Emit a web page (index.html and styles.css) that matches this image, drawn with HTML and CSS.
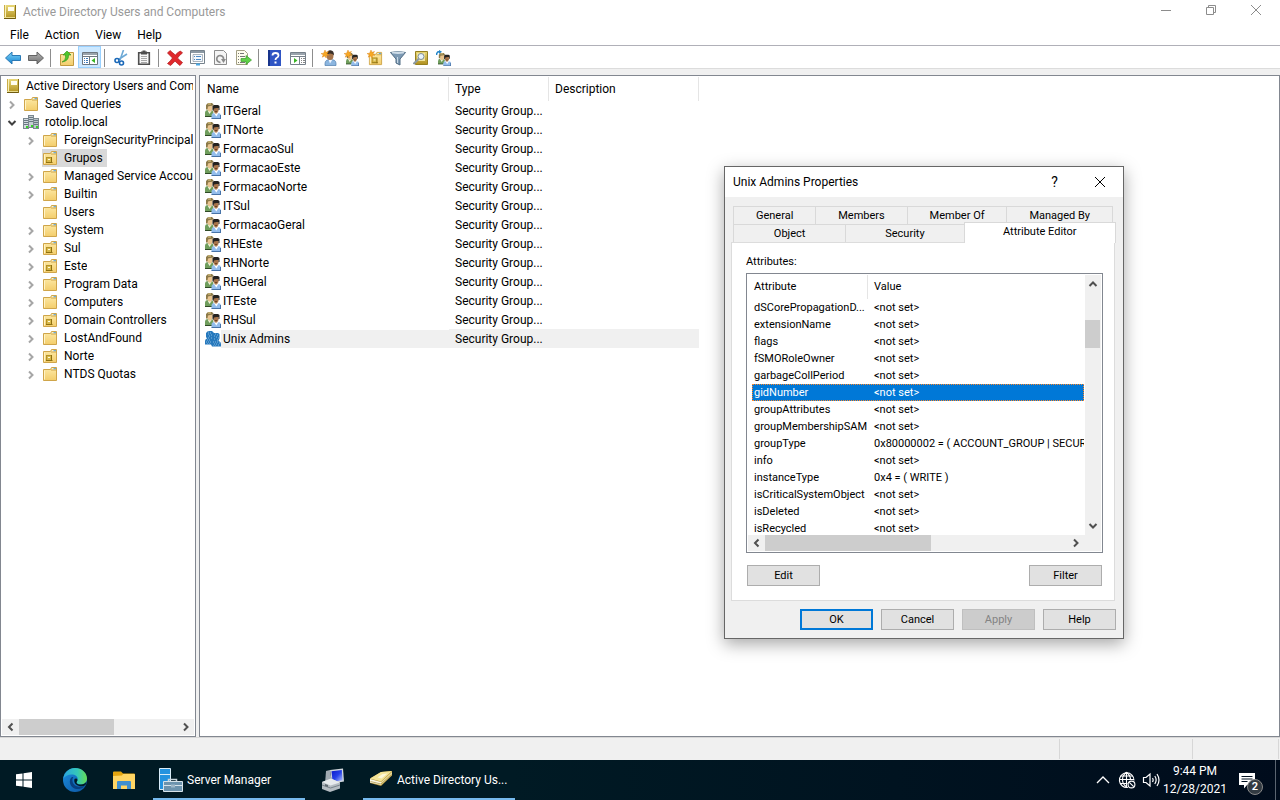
FILE: index.html
```html
<!DOCTYPE html>
<html lang="en">
<head>
    <meta charset="UTF-8">
    <meta name="viewport" content="width=device-width, initial-scale=1.0">
    <title>Active Directory Users and Computers</title>
    <link rel="stylesheet" href="styles.css">
</head>
<body>
    <!-- Shared icons -->
    <svg class="defs" aria-hidden="true">
        <defs>
            <linearGradient id="g-folder" x1="0" y1="0" x2="0" y2="1"><stop offset="0" stop-color="#fdeaa8"/><stop offset="1" stop-color="#f3cd6b"/></linearGradient>
            <linearGradient id="g-book" x1="0" y1="0" x2="0" y2="1"><stop offset="0" stop-color="#e9d878"/><stop offset="1" stop-color="#b08f1c"/></linearGradient>
            <linearGradient id="g-blue" x1="0" y1="0" x2="0" y2="1"><stop offset="0" stop-color="#7fd4f8"/><stop offset="1" stop-color="#1583d0"/></linearGradient>
            <linearGradient id="g-gray" x1="0" y1="0" x2="0" y2="1"><stop offset="0" stop-color="#b5b5b5"/><stop offset="1" stop-color="#6f6f6f"/></linearGradient>
            <linearGradient id="g-edge" x1="0" y1="0" x2="1" y2="0"><stop offset="0" stop-color="#2aa5e0"/><stop offset="0.6" stop-color="#35c8b8"/><stop offset="1" stop-color="#66dc52"/></linearGradient>
            <linearGradient id="g-edge-dark" x1="0" y1="0" x2="1" y2="1"><stop offset="0" stop-color="#1b8ee0"/><stop offset="1" stop-color="#0c54a0"/></linearGradient>
            <linearGradient id="g-screen" x1="0" y1="0" x2="1" y2="1"><stop offset="0" stop-color="#0a18c8"/><stop offset="0.5" stop-color="#2540e8"/><stop offset="1" stop-color="#b8c8ff"/></linearGradient>
        </defs>
        <symbol id="i-book" viewBox="0 0 16 16">
            <path d="M2 1h12v14H2z" fill="url(#g-book)"/>
            <path d="M2 1h2v12H2z" fill="#f8f0b8"/>
            <path d="M2.500 1v14" stroke="#c9ad48"/>
            <rect x="6" y="3" width="6" height="4" fill="#fffdf0"/>
            <path d="M2 13.500h12" stroke="#e9dc8c"/>
            <path d="M2 14.500h12" stroke="#6e5a10"/>
            <path d="M13.500 1v14" stroke="#8d7318"/>
        </symbol>
        <symbol id="i-folder" viewBox="0 0 16 16">
            <path d="M1.500 14.500v-11h7l1-2h5v13z" fill="url(#g-folder)" stroke="#cfa54a"/>
            <path d="M9 4h5.500" stroke="#cfa54a"/>
            <path d="M10.500 2.700h1" stroke="#fff"/><path d="M11.500 2.700h2.500" stroke="#4f9fe0"/>
            <path d="M2.500 13.500v-9" stroke="#fff4c8"/>
        </symbol>
        <symbol id="i-ou" viewBox="0 0 16 16">
            <use href="#i-folder"/>
            <path d="M4 7h6v6H4z" fill="#d8b94a"/>
            <path d="M4 12.500h6.500M9.500 7v6" stroke="#8f7112"/>
            <path d="M4 7.500h5M4.500 7v5" stroke="#b4932a"/>
            <path d="M6 9.500h2" stroke="#fffbe0"/>
        </symbol>
        <symbol id="i-domain" viewBox="0 0 16 16">
            <rect x="5.500" y="1.500" width="5" height="12" fill="#c5ced4" stroke="#7b8890"/>
            <rect x="0.500" y="4.500" width="5" height="10" fill="#d3dbe0" stroke="#7b8890"/>
            <rect x="10.500" y="4.500" width="5" height="10" fill="#b8c3ca" stroke="#7b8890"/>
            <path d="M6 3.500h4M6 5.500h4M6 7.500h4M1 6.500h4M1 8.500h4M1 10.500h4M11 6.500h4M11 8.500h4M11 10.500h4" stroke="#697882"/>
            <path d="M3 13h2M8 12h2M13 13h2" stroke="#35d228" stroke-width="2"/>
        </symbol>
        <symbol id="i-group" viewBox="0 0 16 16">
            <path d="M0 13.500V10q0-3 3-3h4l1.500 2-1.500 4.500z" fill="#6f9d5c"/>
            <path d="M0 13.500h7" stroke="#2f4a26"/>
            <path d="M2.500 7.500L4.500 11 7 7.500z" fill="#eef3dc"/>
            <path d="M2 1.500h5.500V6L6 8.500H4L2 6z" fill="#e9c48f"/>
            <path d="M1 6.500V2L3 0h4l1.500 1.500v1L5 3 3 3.500 2.500 6.500z" fill="#8d7a48"/>
            <path d="M3 1h3" stroke="#e6d08c"/>
            <path d="M6.500 15.500V13q0-3 3-3H13q3 0 3 3v2.500z" fill="#93bdec"/>
            <path d="M6.500 15.500H16M15.500 12v4" stroke="#4773a8"/>
            <path d="M9 10l2.300 3.500L13.500 10z" fill="#fff"/>
            <path d="M8.500 4h5v4L12 10.500h-2L8.500 8z" fill="#a8744a"/>
            <path d="M7.500 7V3L9 2h4l1.500 1v4h-1V5h-2L9 5.500 8.500 8z" fill="#252220"/>
            <path d="M10 8.500h2" stroke="#6d4426"/>
        </symbol>
        <symbol id="i-group-sel" viewBox="0 0 16 16">
            <path d="M0 13.500V10q0-2 2-2.500L1 6V2l2-2h4l2 2h4l1.500 1v4.500L13.500 10q2.500.5 2.500 3v2.500H7l-1-2z" fill="#2779bd"/>
            <path d="M3 1h1M5 2h1M3 3h1M6 4h1M4 5h1M3 7h1M6 7h1M2 9h1M4 9h1M1 11h1M3 11h1M5 11h1M2 13h1M4 13h1M10 3h1M12 4h1M9 5h1M11 6h1M13 7h1M9 8h1M12 9h1M8 11h1M10 11h1M12 11h1M14 12h1M9 13h1M11 13h1M13 14h1M8 15h1M10 15h1" stroke="#86b9df"/>
        </symbol>
        <symbol id="i-star" viewBox="0 0 16 16">
            <path d="M4 0l.9 2.300L7.500 1.500 6 3.700 8 5.200 5.500 5.300 5.200 8 3.700 6 1.200 7.200 2.200 4.800 0 3.600l2.600-.4z" fill="#f7a823" stroke="#d97c10" stroke-width="0.400"/>
        </symbol>
        <symbol id="i-right" viewBox="0 0 10 10"><path d="M3 1.500L6.500 5 3 8.500" fill="none" stroke="currentColor" stroke-width="2"/></symbol>
        <symbol id="i-left" viewBox="0 0 10 10"><path d="M6.500 1.500L3 5l3.500 3.500" fill="none" stroke="currentColor" stroke-width="2"/></symbol>
        <symbol id="i-down" viewBox="0 0 10 10"><path d="M1.500 3L5 6.500 8.500 3" fill="none" stroke="currentColor" stroke-width="2"/></symbol>
        <symbol id="i-up" viewBox="0 0 10 10"><path d="M1.500 7L5 3.500 8.500 7" fill="none" stroke="currentColor" stroke-width="2"/></symbol>
        <symbol id="i-close" viewBox="0 0 12 12"><path d="M1 1l10 10M11 1L1 11" fill="none" stroke="currentColor"/></symbol>
    </svg>

    <header class="titlebar">
        <svg class="icon"><use href="#i-book"/></svg>
        <h1 class="window-title">Active Directory Users and Computers</h1>
        <div class="window-buttons">
            <button aria-label="Minimize"><svg width="12" height="12"><path d="M1 6.500h10" stroke="currentColor"/></svg></button>
            <button aria-label="Restore"><svg width="12" height="12"><path d="M1.500 3.500h7v7h-7zM3.500 3V1.500h7v7H9" fill="none" stroke="currentColor"/></svg></button>
            <button aria-label="Close"><svg width="12" height="12"><use href="#i-close"/></svg></button>
        </div>
    </header>

    <nav class="menubar">
        <button>File</button>
        <button>Action</button>
        <button>View</button>
        <button>Help</button>
    </nav>

    <div class="toolbar">
        <button aria-label="Back"><svg class="icon" viewBox="0 0 16 16"><path d="M0.500 8L7 2v3.500h8.500v5H7V14z" fill="url(#g-blue)" stroke="#2a79b5"/></svg></button>
        <button aria-label="Forward"><svg class="icon" viewBox="0 0 16 16"><path d="M15.500 8L9 2v3.500H.5v5H9V14z" fill="url(#g-gray)" stroke="#636363"/></svg></button>
        <span class="sep"></span>
        <button aria-label="Up one level"><svg class="icon" viewBox="0 0 16 16"><path d="M1.500 15.500v-11h6l1-2h6v13z" fill="url(#g-folder)" stroke="#c29a3f"/><path d="M3 12Q7 10.500 6.500 5H4l4-4 4 4H9.500Q10 11 3 12z" fill="#4fc62c" stroke="#2e8f18" stroke-width="0.600"/></svg></button>
        <button class="pressed" aria-label="Show console tree"><svg class="icon" viewBox="0 0 16 16"><path d="M.5 2.500h15v12H.5z" fill="#fff" stroke="#6e7780"/><path d="M1 4h14" stroke="#9aa4ad" stroke-width="2"/><path d="M1 6.500h14M7.500 7v7" stroke="#6e7780"/><path d="M2 8.500h1M4 8.500h2M2 10.500h1M4 10.500h2M2 12.500h1M4 12.500h2" stroke="#3d78b8"/><path d="M13 8v5l-3.500-2.500z" fill="#37b522"/></svg></button>
        <span class="sep"></span>
        <button aria-label="Cut"><svg class="icon" viewBox="0 0 16 16"><path d="M10.500 0L7 10M14 4L5.500 9.500" stroke="#6da9d6" stroke-width="1.600"/><circle cx="4" cy="10.500" r="2" fill="none" stroke="#1a68b8" stroke-width="1.600"/><circle cx="8.500" cy="13" r="2" fill="none" stroke="#1a68b8" stroke-width="1.600"/></svg></button>
        <button aria-label="Paste"><svg class="icon" viewBox="0 0 16 16"><path d="M2.700 2.700h10.600v11.600H2.700z" fill="#f7f7f7" stroke="#4e4e4e" stroke-width="1.600"/><path d="M5 1.500h1.500V.5h3v1H11v3H5z" fill="#4e4e4e"/><path d="M5 6.500h6M5 8.500h6M5 10.500h6M5 12.500h6" stroke="#a8a8a8"/></svg></button>
        <span class="sep"></span>
        <button aria-label="Delete"><svg class="icon" viewBox="0 0 16 16"><path d="M0.500 3l2.500-2.500Q6 3 8.300 5 11 2 13.500 1L15.500 3Q12.500 5 10.500 8q2 2.200 5 4.500L13 15.500Q10 13.500 8 11 6 13.500 3.500 15.500L.5 13.500Q3.500 11 5.500 8 3 5.500.5 3z" fill="#e0282c" stroke="#b01518" stroke-width="0.700"/></svg></button>
        <button aria-label="Properties"><svg class="icon" viewBox="0 0 16 16"><path d="M.5.500h14v13H.5z" fill="#fff" stroke="#76828c"/><path d="M1 2h13" stroke="#8b98a3" stroke-width="2"/><path d="M3 4.500h9.500v7H3z" fill="#f3f8fd" stroke="#8a97a2" stroke-width="0.700"/><path d="M4 6.500h1M6 6.500h5M4 9.500h1M6 9.500h5" stroke="#4d8ac5"/><path d="M6 14.500h4" stroke="#4aa8e5" stroke-width="2"/></svg></button>
        <button aria-label="Refresh"><svg class="icon" viewBox="0 0 16 16"><path d="M1.500.500h9l3 3v11h-12z" fill="#f4f4f4" stroke="#8c8c8c"/><path d="M10.500 9.500a3.400 3.400 0 1 0-3 2.800" fill="none" stroke="#8a8a8a" stroke-width="1.700"/><path d="M8 9h5l-2.500 4z" fill="#8a8a8a"/></svg></button>
        <button aria-label="Export list"><svg class="icon" viewBox="0 0 16 16"><path d="M.5.500h8l3 3v11H.5z" fill="#fffdee" stroke="#a39f84"/><path d="M2 3.500h1M4 3.500h4M2 6.500h1M4 6.500h5M2 9.500h1M2 12.500h1M4 12.500h5" stroke="#777"/><path d="M5 8.500h5V5.500l5.500 4.500L10 14.500v-3H5z" fill="#5fd048" stroke="#3a9c28" stroke-width="0.700"/></svg></button>
        <span class="sep"></span>
        <button aria-label="Help"><svg class="icon help-icon" viewBox="0 0 16 16"><path d="M1 0h13v16H1z" fill="#2f55c4"/><path d="M1 0h2v16H1z" fill="#18348c"/><path d="M5.500 5.500Q5.500 3 8.500 3t3 2.500Q11.500 7 9.500 8 8.500 8.500 8.500 10" fill="none" stroke="#fff" stroke-width="1.800"/><path d="M7.500 11.500h2v2h-2z" fill="#fff"/></svg></button>
        <button aria-label="Show action pane"><svg class="icon" viewBox="0 0 16 16"><path d="M.5 2.500h15v12H.5z" fill="#fff" stroke="#76808a"/><path d="M1 4h14" stroke="#9aa4ad" stroke-width="2"/><path d="M1 6.500h14M9.500 7v7" stroke="#76808a"/><path d="M11 8.500h1M13 8.500h2M11 10.500h1M13 10.500h2M11 12.500h1M13 12.500h2" stroke="#888"/><path d="M4 8v5l3.500-2.500z" fill="#37b522"/></svg></button>
        <span class="sep"></span>
        <button aria-label="New user"><svg class="icon" viewBox="0 0 16 16"><path d="M4 15.500v-2Q4 9.500 9.500 9.500t5.500 4v2z" fill="#8bb5df" stroke="#4d7cad" stroke-width="0.700"/><path d="M7.500 9.500l1.500 4 2.500-4z" fill="#f0f6ff"/><ellipse cx="9" cy="5.500" rx="3.500" ry="4.500" fill="#a5744b"/><path d="M5.500 5Q6 0 9.500.2t3.500 5Q11.500 3.500 9 3.500 7 3.500 5.500 5z" fill="#3b3029"/><use href="#i-star"/></svg></button>
        <button aria-label="New group"><svg class="icon" viewBox="0 0 16 16"><use href="#i-group" x="2" y="3" width="13" height="13"/><use href="#i-star"/></svg></button>
        <button aria-label="New organizational unit"><svg class="icon" viewBox="0 0 16 16"><use href="#i-ou" x="1" y="1" width="15" height="15"/><use href="#i-star"/></svg></button>
        <button aria-label="Filter"><svg class="icon" viewBox="0 0 16 16"><path d="M.5 2.500Q8 .5 15.500 2.500L10 9v6l-4-2V9z" fill="#7d9ab4" stroke="#4e6a82"/><ellipse cx="8" cy="2.700" rx="6.500" ry="1.200" fill="#cfdde8"/><path d="M7.500 7v6" stroke="#c8d8e5"/></svg></button>
        <button aria-label="Find"><svg class="icon" viewBox="0 0 16 16"><path d="M2.500 1.500h12v13h-12z" fill="url(#g-book)" stroke="#96801f"/><path d="M4 3h8v8H4z" fill="#efe29a"/><circle cx="8" cy="6.500" r="3" fill="#e8f4fc" stroke="#7e8c94"/><path d="M5.800 8.800L.5 14" stroke="#8c9aa3" stroke-width="2"/></svg></button>
        <button aria-label="Add to group"><svg class="icon" viewBox="0 0 16 16"><use href="#i-group" x="2" y="3" width="13" height="13"/><path d="M.5 5Q.5 1.500 4 1.500" fill="none" stroke="#2385c8" stroke-width="1.500"/><path d="M3 0l3 1.800L3 4z" fill="#2385c8"/></svg></button>
    </div>

    <main class="workspace">
        <aside class="tree-pane">
            <ul class="tree">
                <li><div class="node root"><svg class="icon"><use href="#i-book"/></svg><span>Active Directory Users and Computers</span></div>
                    <ul>
                        <li><div class="node"><button class="twist" aria-label="Expand"><svg><use href="#i-right"/></svg></button><svg class="icon"><use href="#i-folder"/></svg><span>Saved Queries</span></div></li>
                        <li><div class="node"><button class="twist open" aria-label="Collapse"><svg><use href="#i-down"/></svg></button><svg class="icon"><use href="#i-domain"/></svg><span>rotolip.local</span></div>
                            <ul class="level">
                                <li><div class="node"><button class="twist" aria-label="Expand"><svg><use href="#i-right"/></svg></button><svg class="icon"><use href="#i-folder"/></svg><span>ForeignSecurityPrincipals</span></div></li>
                                <li><div class="node"><i class="twist"></i><span class="picked"><svg class="icon"><use href="#i-ou"/></svg><span>Grupos</span></span></div></li>
                                <li><div class="node"><button class="twist" aria-label="Expand"><svg><use href="#i-right"/></svg></button><svg class="icon"><use href="#i-folder"/></svg><span>Managed Service Accounts</span></div></li>
                                <li><div class="node"><button class="twist" aria-label="Expand"><svg><use href="#i-right"/></svg></button><svg class="icon"><use href="#i-folder"/></svg><span>Builtin</span></div></li>
                                <li><div class="node"><i class="twist"></i><svg class="icon"><use href="#i-folder"/></svg><span>Users</span></div></li>
                                <li><div class="node"><button class="twist" aria-label="Expand"><svg><use href="#i-right"/></svg></button><svg class="icon"><use href="#i-folder"/></svg><span>System</span></div></li>
                                <li><div class="node"><button class="twist" aria-label="Expand"><svg><use href="#i-right"/></svg></button><svg class="icon"><use href="#i-ou"/></svg><span>Sul</span></div></li>
                                <li><div class="node"><button class="twist" aria-label="Expand"><svg><use href="#i-right"/></svg></button><svg class="icon"><use href="#i-ou"/></svg><span>Este</span></div></li>
                                <li><div class="node"><button class="twist" aria-label="Expand"><svg><use href="#i-right"/></svg></button><svg class="icon"><use href="#i-folder"/></svg><span>Program Data</span></div></li>
                                <li><div class="node"><button class="twist" aria-label="Expand"><svg><use href="#i-right"/></svg></button><svg class="icon"><use href="#i-folder"/></svg><span>Computers</span></div></li>
                                <li><div class="node"><button class="twist" aria-label="Expand"><svg><use href="#i-right"/></svg></button><svg class="icon"><use href="#i-ou"/></svg><span>Domain Controllers</span></div></li>
                                <li><div class="node"><button class="twist" aria-label="Expand"><svg><use href="#i-right"/></svg></button><svg class="icon"><use href="#i-folder"/></svg><span>LostAndFound</span></div></li>
                                <li><div class="node"><button class="twist" aria-label="Expand"><svg><use href="#i-right"/></svg></button><svg class="icon"><use href="#i-ou"/></svg><span>Norte</span></div></li>
                                <li><div class="node"><button class="twist" aria-label="Expand"><svg><use href="#i-right"/></svg></button><svg class="icon"><use href="#i-folder"/></svg><span>NTDS Quotas</span></div></li>
                            </ul>
                        </li>
                    </ul>
                </li>
            </ul>
            <div class="scroll-x">
                <button aria-label="Scroll left"><svg><use href="#i-left"/></svg></button>
                <div class="track"><div class="thumb tree-thumb"></div></div>
                <button aria-label="Scroll right"><svg><use href="#i-right"/></svg></button>
            </div>
        </aside>

        <section class="list-pane">
            <table class="objects">
                <colgroup><col class="col-name"><col class="col-type"><col class="col-desc"></colgroup>
                <thead>
                    <tr><th>Name</th><th>Type</th><th>Description</th></tr>
                </thead>
                <tbody>
                    <tr><td><svg class="icon"><use href="#i-group"/></svg><span>ITGeral</span></td><td>Security Group...</td><td></td></tr>
                    <tr><td><svg class="icon"><use href="#i-group"/></svg><span>ITNorte</span></td><td>Security Group...</td><td></td></tr>
                    <tr><td><svg class="icon"><use href="#i-group"/></svg><span>FormacaoSul</span></td><td>Security Group...</td><td></td></tr>
                    <tr><td><svg class="icon"><use href="#i-group"/></svg><span>FormacaoEste</span></td><td>Security Group...</td><td></td></tr>
                    <tr><td><svg class="icon"><use href="#i-group"/></svg><span>FormacaoNorte</span></td><td>Security Group...</td><td></td></tr>
                    <tr><td><svg class="icon"><use href="#i-group"/></svg><span>ITSul</span></td><td>Security Group...</td><td></td></tr>
                    <tr><td><svg class="icon"><use href="#i-group"/></svg><span>FormacaoGeral</span></td><td>Security Group...</td><td></td></tr>
                    <tr><td><svg class="icon"><use href="#i-group"/></svg><span>RHEste</span></td><td>Security Group...</td><td></td></tr>
                    <tr><td><svg class="icon"><use href="#i-group"/></svg><span>RHNorte</span></td><td>Security Group...</td><td></td></tr>
                    <tr><td><svg class="icon"><use href="#i-group"/></svg><span>RHGeral</span></td><td>Security Group...</td><td></td></tr>
                    <tr><td><svg class="icon"><use href="#i-group"/></svg><span>ITEste</span></td><td>Security Group...</td><td></td></tr>
                    <tr><td><svg class="icon"><use href="#i-group"/></svg><span>RHSul</span></td><td>Security Group...</td><td></td></tr>
                    <tr class="current"><td><svg class="icon"><use href="#i-group-sel"/></svg><span>Unix Admins</span></td><td>Security Group...</td><td></td></tr>
                </tbody>
            </table>
        </section>
    </main>

    <div class="statusbar">
        <span class="status-main"></span>
        <span class="status-cell"></span>
        <span class="status-cell last"></span>
    </div>

    <!-- Properties window -->
    <section class="dialog" role="dialog" aria-labelledby="dialog-title">
        <header class="dialog-head">
            <h2 id="dialog-title">Unix Admins Properties</h2>
            <button class="ask" aria-label="What's this">?</button>
            <button aria-label="Close"><svg width="12" height="12"><use href="#i-close"/></svg></button>
        </header>
        <div class="tabs" role="tablist">
            <div class="tab-row back">
                <button role="tab">General</button>
                <button role="tab">Members</button>
                <button role="tab">Member Of</button>
                <button role="tab">Managed By</button>
            </div>
            <div class="tab-row front">
                <button role="tab">Object</button>
                <button role="tab">Security</button>
                <button role="tab" class="active" aria-selected="true">Attribute Editor</button>
            </div>
        </div>
        <div class="sheet" role="tabpanel">
            <h3 class="caption">Attributes:</h3>
            <div class="attr-box">
                <div class="attr-view">
                    <div class="attr-clip">
                        <table class="attrs">
                            <colgroup><col class="col-attr"><col></colgroup>
                            <thead>
                                <tr><th>Attribute</th><th>Value</th></tr>
                            </thead>
                            <tbody>
                                <tr><td>dSCorePropagationD...</td><td>&lt;not set&gt;</td></tr>
                                <tr><td>extensionName</td><td>&lt;not set&gt;</td></tr>
                                <tr><td>flags</td><td>&lt;not set&gt;</td></tr>
                                <tr><td>fSMORoleOwner</td><td>&lt;not set&gt;</td></tr>
                                <tr><td>garbageCollPeriod</td><td>&lt;not set&gt;</td></tr>
                                <tr class="selected"><td>gidNumber</td><td>&lt;not set&gt;</td></tr>
                                <tr><td>groupAttributes</td><td>&lt;not set&gt;</td></tr>
                                <tr><td>groupMembershipSAM</td><td>&lt;not set&gt;</td></tr>
                                <tr><td>groupType</td><td>0x80000002 = ( ACCOUNT_GROUP | SECURITY_ENABLED )</td></tr>
                                <tr><td>info</td><td>&lt;not set&gt;</td></tr>
                                <tr><td>instanceType</td><td>0x4 = ( WRITE )</td></tr>
                                <tr><td>isCriticalSystemObject</td><td>&lt;not set&gt;</td></tr>
                                <tr><td>isDeleted</td><td>&lt;not set&gt;</td></tr>
                                <tr><td>isRecycled</td><td>&lt;not set&gt;</td></tr>
                            </tbody>
                        </table>
                    </div>
                    <div class="scroll-y">
                        <button aria-label="Scroll up"><svg><use href="#i-up"/></svg></button>
                        <div class="track"><div class="thumb attr-thumb-y"></div></div>
                        <button aria-label="Scroll down"><svg><use href="#i-down"/></svg></button>
                    </div>
                </div>
                <div class="scroll-x with-corner">
                    <button aria-label="Scroll left"><svg><use href="#i-left"/></svg></button>
                    <div class="track"><div class="thumb attr-thumb-x"></div></div>
                    <button aria-label="Scroll right"><svg><use href="#i-right"/></svg></button>
                </div>
            </div>
            <div class="sheet-actions">
                <button class="btn">Edit</button>
                <button class="btn">Filter</button>
            </div>
        </div>
        <footer class="dialog-actions">
            <button class="btn default">OK</button>
            <button class="btn">Cancel</button>
            <button class="btn" disabled>Apply</button>
            <button class="btn">Help</button>
        </footer>
    </section>

    <footer class="taskbar">
        <button class="task small start" aria-label="Start"><svg width="16" height="16"><path d="M0 2.300L6.500 1.400v6.100H0zM7.500 1.200L16 0v7.500H7.500zM0 8.500h6.500v6.100L0 13.700zM7.500 8.500H16V16l-8.500-1.200z" fill="#fff"/></svg></button>
        <button class="task small" aria-label="Microsoft Edge"><svg width="24" height="24"><circle cx="12" cy="12" r="12" fill="url(#g-edge-dark)"/><path d="M.3 10.500C1.300 4.500 6 0 12 0c7 0 12 5 12 10.500 0 3.500-2.500 6-6 6-3 0-4.500-1.200-4.500-2.200 0-.8 1.200-1.300 1.200-3.300 0-2.500-2.500-4.500-6-4.500C5 6.500 1.800 8.500.3 10.500z" fill="url(#g-edge)"/><path d="M9 9c-2 1.500-2.500 4-2 6 1 4.500 5 6.500 9 6 2.500-.3 4.500-1.500 5.500-3-5 2-11.500.5-12-5C9.400 11.500 9.500 10 10.500 9z" fill="#083f80"/><path d="M22.500 17c-1.500 1-3.500 1.500-5.500 1.200-4-.6-6.500-3.700-5.500-7.200 1-1 3-.5 3 1-.2 1.300-1 1.700-1 2.400 0 1 1.500 2.200 4.500 2.200 2 0 4.500-1 5.500-3z" fill="#001a24"/></svg></button>
        <button class="task small" aria-label="File Explorer"><svg width="24" height="24"><path d="M1 4.500q0-1 1-1h7l2 2h11q1 0 1 1v14H1z" fill="#e5a50e"/><path d="M1 8l9-.5 1-1.500h11q1 0 1 1v14H1z" fill="#ffd563"/><path d="M5 21v-7q0-1 1-1h12q1 0 1 1v7h-4v-3.500H9V21z" fill="#3f8fd0"/></svg></button>
        <button class="task wide running"><svg width="24" height="24"><path d="M.5.500h11v21H.5z" fill="#2493df" stroke="#d9ecf8"/><path d="M1 6.500h10" stroke="#d9ecf8" /><path d="M9.500 14v-2.500h8V14" fill="none" stroke="#c8d4dc" stroke-width="1.500"/><path d="M4.500 13.500h19v10h-19z" fill="#6c93ad" stroke="#d7e3ea"/><path d="M5 17.500h18" stroke="#d7e3ea"/><path d="M12 16.500h4v3h-4z" fill="#9fb9ca"/></svg><span>Server Manager</span></button>
        <button class="task computer" aria-label="Computer"><svg width="24" height="24"><path d="M9 2l13-1.500 1 13-12 2z" fill="#cfd6dc"/><path d="M10.500 3.200l10.300-1.200.8 10.200-10 1.600z" fill="url(#g-screen)"/><path d="M5 3l4-1 2 13-7 1z" fill="#9fa9b1"/><path d="M1 14l9-3.500 9 4v6l-10 3.500-8-3z" fill="#b4bcc2"/><path d="M1 14l9-3.500 9 4-9.500 3z" fill="#e6eaed"/><path d="M1 17l8.500 3 9.500-3" fill="none" stroke="#77828a"/><path d="M4 16l3 1v2l-3-1z" fill="#5d6870"/></svg></button>
        <button class="task wide running"><svg width="24" height="24"><path d="M1 10.500L12 4l11-1v4.500L12 18 1 15z" fill="#b8973a"/><path d="M1 10.500L12 4l11-1-11 10.500z" fill="#f3e497"/><path d="M1 11l11 3v3L1 14.500z" fill="#f9f6e4"/><path d="M12 14L23 4v2.800L12 17z" fill="#e8dca0"/><path d="M8.500 9.500l5-3.500 5-.5-6 5z" fill="#fdf8d8"/><path d="M1.500 13.500l10.500 2.500L22.500 6.500" fill="none" stroke="#a98c34" stroke-width="0.700"/></svg><span>Active Directory Us...</span></button>
        <div class="tray">
            <button aria-label="Show hidden icons"><svg width="16" height="16"><path d="M2 11l6-6 6 6" fill="none" stroke="#fff" stroke-width="1.300"/></svg></button>
            <button aria-label="Network"><svg width="18" height="18"><g fill="none" stroke="#fff" stroke-width="1.100"><path d="M10 16.300A7.300 7.300 0 1 1 16 9.500"/><path d="M8.500 1.200Q4.500 4 4.500 8.500t4 7.500M8.500 1.200Q12.500 4 12.500 9M8.500 1v15M1.500 8.500H16M2.500 5h12M2.500 12.500h7"/><circle cx="13.500" cy="13.500" r="3.400" fill="#001020"/><path d="M11.300 11.300l4.400 4.400"/></g></svg></button>
            <button aria-label="Volume"><svg width="18" height="18"><g fill="none" stroke="#fff" stroke-width="1.200"><path d="M1.500 6.500h2.500l4-3.500v12L4 11.500H1.500z"/><path d="M10.500 7q1.300 2 0 4M12.800 5q2.700 4 0 8M15 3q4 6 0 12"/></g></svg></button>
            <button class="clock"><span>9:44 PM</span><span>12/28/2021</span></button>
            <button class="notify" aria-label="Notifications"><svg width="18" height="18"><path d="M1 2h16v12H9l-3 3.500V14H1z" fill="#fff"/><path d="M3.500 5.500h11M3.500 8h11M3.500 10.500h6" stroke="#001020"/></svg><span class="badge">2</span></button>
            <button class="desktop" aria-label="Show desktop"></button>
        </div>
    </footer>
</body>
</html>
```

FILE: styles.css
```css
* {
    box-sizing: border-box;
}
body {
    margin: 0;
    min-height: 100vh;
    display: flex;
    flex-direction: column;
    position: relative;
    overflow: hidden;
    background-color: #f0f0f0;
    color: #000;
    font-family: Roboto, "Noto Sans", sans-serif;
    font-size: 12px;
    line-height: 18px;
    white-space: nowrap;
}
button {
    margin: 0;
    padding: 0;
    border: 0;
    background: none;
    color: inherit;
    font: inherit;
}
h1, h2, h3 {
    margin: 0;
    font-size: inherit;
    font-weight: normal;
}
ul {
    margin: 0;
    padding: 0;
    list-style: none;
}
table {
    border-collapse: separate;
    border-spacing: 0;
    table-layout: fixed;
}
th, td {
    padding: 0;
    text-align: left;
    font-weight: normal;
}
.defs {
    position: absolute;
    width: 0;
    height: 0;
}
.icon {
    width: 16px;
    height: 16px;
    flex: none;
    display: block;
}

/* Title bar, menu and toolbar */
.titlebar {
    display: flex;
    align-items: center;
    height: 24px;
    padding-left: 2px;
    gap: 5px;
    background-color: #fff;
    color: #999;
}
.window-title {
    flex: 1;
}
.window-buttons {
    display: flex;
    align-self: flex-start;
    padding-right: 2px;
    color: #8c8c8c;
}
.window-buttons button {
    width: 45px;
    height: 20px;
    display: flex;
    align-items: center;
    justify-content: center;
}
.menubar {
    display: flex;
    height: 22px;
    padding-left: 2px;
    background-color: #fff;
    border-bottom: 1px solid #b0b0b8;
}
.menubar button {
    padding: 0 8px;
}
.toolbar {
    display: flex;
    align-items: stretch;
    height: 23px;
    padding-left: 1px;
    background-color: #fff;
    border-bottom: 1px solid #dcdcdc;
}
.toolbar button {
    width: 23px;
    display: flex;
    align-items: center;
    justify-content: center;
    padding-top: 2px;
}
.toolbar .pressed {
    background-color: #cce8ff;
    border: 1px solid #99d1ff;
    padding-top: 1px;
}
.sep {
    width: 8px;
    padding: 3px 0 1px 3px;
}
.sep::before {
    content: "";
    display: block;
    width: 1px;
    height: 100%;
    background-color: #8d8d8d;
}

/* Panes */
.workspace {
    flex: 1;
    display: flex;
    gap: 3px;
    padding-top: 6px;
    min-height: 0;
}
.tree-pane {
    width: 196px;
    display: flex;
    flex-direction: column;
    padding: 1px;
    background-color: #fff;
    border: 1px solid #828790;
}
.tree {
    flex: 1;
    overflow: hidden;
}
.level {
    padding-left: 19px;
}
.node {
    display: flex;
    align-items: center;
    height: 18px;
    padding-left: 2px;
}
.node > span,
.picked > span {
    min-width: 0;
    overflow: hidden;
    padding-left: 6px;
}
.node > span:last-child {
    margin-right: 1px;
}
.node.root > span {
    padding-left: 5px;
}
.node.root {
    padding-left: 3px;
}
.twist {
    width: 19px;
    height: 18px;
    flex: none;
    display: flex;
    align-items: center;
    padding: 2px 0 0 3px;
    color: #a6a6a6;
}
.twist.open {
    color: #404040;
}
.twist svg {
    width: 10px;
    height: 10px;
}
.node .picked {
    display: flex;
    align-items: center;
    padding: 0 4px 0 0;
    background-color: #d9d9d9;
}
.list-pane {
    flex: 1;
    min-width: 0;
    padding: 1px 0;
    background-color: #fff;
    border: 1px solid #828790;
}

/* Object list */
.objects {
    width: 499px;
}
.col-name {
    width: 249px;
}
.col-type {
    width: 100px;
}
.objects th {
    height: 24px;
    padding-left: 6px;
    border-right: 1px solid #e5e5e5;
}
.objects th:first-child {
    padding-left: 7px;
}
.objects td {
    height: 19px;
    padding-left: 6px;
}
.objects td:first-child {
    display: flex;
    align-items: center;
    padding-left: 5px;
}
.objects td span {
    flex: 1;
    padding-left: 2px;
}
.current td:not(:first-child),
.current span {
    background-color: #f0f0f0;
}

/* Scroll bars */
.scroll-x,
.scroll-y {
    display: flex;
    background-color: #f0f0f0;
    color: #505050;
}
.scroll-x {
    height: 16px;
}
.scroll-y {
    width: 16px;
    flex-direction: column;
}
.scroll-x.with-corner {
    padding-right: 17px;
}
.scroll-x button,
.scroll-y button {
    width: 17px;
    height: 16px;
    display: flex;
    align-items: center;
    justify-content: center;
}
.scroll-y button {
    width: 16px;
    height: 18px;
}
.scroll-x svg,
.scroll-y svg {
    width: 10px;
    height: 10px;
}
.track {
    flex: 1;
}
.thumb {
    height: 100%;
    background-color: #cdcdcd;
}
.tree-thumb {
    width: 60%;
}
.attr-thumb-x {
    width: 55%;
}
.attr-thumb-y {
    height: 28px;
    width: 15px;
    margin-top: 27px;
}

.statusbar {
    display: flex;
    height: 23px;
    border-top: 1px solid #d7d7d7;
    padding: 1px 1px 1px 0;
}
.status-main {
    flex: 1;
}
.status-cell {
    width: 133px;
    border-left: 1px solid #d7d7d7;
}
.status-cell.last {
    width: 87px;
    border-right: 1px solid #d7d7d7;
}

/* Properties window */
.dialog {
    position: absolute;
    left: 724px;
    top: 166px;
    width: 400px;
    padding-bottom: 8px;
    background-color: #f0f0f0;
    border: 1px solid #666;
    box-shadow: 0 5px 16px rgba(0, 0, 0, 0.35);
    font-size: 11px;
    line-height: 16px;
}
.dialog-head {
    display: flex;
    align-items: center;
    height: 30px;
    padding: 0 1px 0 8px;
    background-color: #fff;
    font-size: 12px;
}
.dialog-head h2 {
    flex: 1;
}
.dialog-head button {
    width: 45px;
    height: 30px;
    display: flex;
    align-items: center;
    justify-content: center;
}
.dialog-head .ask {
    font-size: 14px;
}
.tabs {
    padding: 9px 8px 0;
}
.tab-row {
    display: flex;
}
.tab-row button {
    height: 18px;
    border: 1px solid #d9d9d9;
    border-width: 1px 0 0 1px;
    flex: 1 1 auto;
    padding-top: 1px;
}
.tab-row.back {
    border-right: 1px solid #d9d9d9;
    margin-right: 2px;
}
.tab-row.back button {
    padding: 1px 20px 0;
}
.tab-row.front {
    display: grid;
    grid-template-columns: 112fr 118fr 152fr;
    margin-right: -1px;
}
.tab-row .active {
    height: 21px;
    margin: -2px 0 -1px;
    border-right-width: 1px;
    background-color: #fff;
    position: relative;
    padding-bottom: 4px;
}
.sheet {
    margin: 0 8px 0 6px;
    padding: 11px 11px 14px 14px;
    background-color: #fff;
    border: 1px solid #dcdcdc;
}
.caption {
    padding-bottom: 3px;
}
.attr-box {
    padding: 1px;
    border: 1px solid #828790;
}
.attr-view {
    display: flex;
}
.attr-clip {
    flex: 1;
    min-width: 0;
    height: 260px;
    overflow: hidden;
    padding: 0 1px 0 4px;
}
.attrs {
    width: 100%;
}
.col-attr {
    width: 116px;
}
.attrs th {
    height: 24px;
    padding-left: 6px;
}
.attrs th:first-child {
    border-right: 1px solid #e5e5e5;
    padding-left: 2px;
}
.attrs td {
    height: 17px;
    padding-left: 6px;
    overflow: hidden;
}
.attrs td:first-child {
    padding-left: 2px;
}
.attrs .selected {
    background-color: #0078d7;
    color: #fff;
    outline: 1px dotted #ff8728;
    outline-offset: -1px;
}
.sheet-actions {
    display: flex;
    justify-content: space-between;
    padding: 12px 1px 0;
}
.btn {
    width: 73px;
    height: 21px;
    background-color: #e1e1e1;
    border: 1px solid #adadad;
}
.btn.default {
    border: 2px solid #0078d7;
}
.btn:disabled {
    background-color: #ccc;
    border-color: #bfbfbf;
    color: #838383;
}
.dialog-actions {
    display: flex;
    justify-content: flex-end;
    gap: 8px;
    padding: 8px 7px 0;
}

/* Taskbar */
.taskbar {
    display: flex;
    height: 40px;
    background: linear-gradient(to right, #001a24, #001a24 40%, #000c1c);
    color: #fff;
}
.task {
    display: flex;
    align-items: center;
}
.task.small {
    width: 49px;
    justify-content: center;
}
.task.start {
    width: 50px;
    padding-right: 2px;
}
.task.wide {
    width: 152px;
    gap: 4px;
    padding-left: 6px;
}
.task.small + .task.wide {
    margin-left: 5px;
}
.task.computer {
    width: 58px;
    padding-left: 16px;
}
.running {
    border-bottom: 2px solid #76b9ed;
    padding-top: 2px;
}
.tray {
    display: flex;
    align-items: center;
    margin-left: auto;
}
.tray button {
    width: 24px;
    height: 40px;
    display: flex;
    align-items: center;
    justify-content: center;
}
.tray .clock {
    width: 64px;
    flex-direction: column;
}
.tray .notify {
    width: 48px;
    position: relative;
    padding-right: 8px;
}
.badge {
    position: absolute;
    left: 20px;
    top: 19px;
    width: 16px;
    height: 16px;
    border: 1px solid #888;
    border-radius: 50%;
    background-color: #333b42;
    font-size: 11px;
    font-weight: 600;
    line-height: 14px;
    text-align: center;
}
.tray .desktop {
    width: 5px;
    border-left: 1px solid #5b6570;
}
```
